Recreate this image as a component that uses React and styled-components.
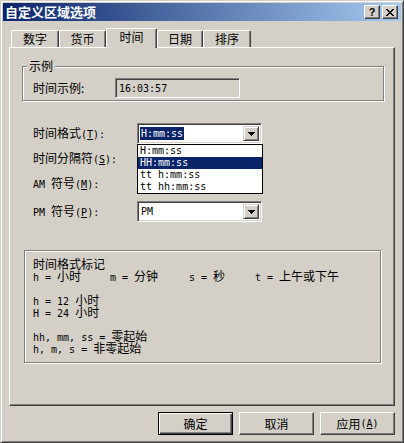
import React from 'react';
import styled, { createGlobalStyle, css } from 'styled-components';

const CJK = `"Noto Sans CJK SC", "Noto Sans", sans-serif`;
const MONO = `"DejaVu Sans Mono", "Liberation Mono", monospace`;

const GlobalStyle = createGlobalStyle`
  html, body { margin: 0; padding: 0; background: #d4d0c8; }
  body {
    width: 404px; height: 443px; overflow: hidden;
    font-family: ${CJK}; font-size: 12px; color: #000;
    -webkit-font-smoothing: antialiased;
  }
  * { box-sizing: border-box; }
`;

const Window = styled.div`
  width: 404px;
  height: 443px;
  background: #d4d0c8;
  border: 1px solid;
  border-color: #d4d0c8 #404040 #404040 #d4d0c8;
  box-shadow: inset 1px 1px #fff, inset -1px -1px #808080;
  padding: 2px;
  display: flex;
  flex-direction: column;
`;

const TitleBar = styled.div`
  flex: none;
  height: 18px;
  background: linear-gradient(to right, #0a246a, #a6caf0);
  display: flex;
  align-items: center;
  padding: 0 3px 0 2px;
  gap: 2px;
`;

const Title = styled.div`
  flex: 1;
  color: #fff;
  font: bold 13px/18px ${CJK};
  white-space: nowrap;
`;

const CapButton = styled.div`
  width: 16px;
  height: 14px;
  background: #d4d0c8;
  border: 1px solid;
  border-color: #fff #404040 #404040 #fff;
  box-shadow: inset -1px -1px #808080;
  display: flex;
  align-items: center;
  justify-content: center;
`;

const HelpGlyph = styled.span`
  font: bold 11px/11px "Liberation Sans", "DejaVu Sans", sans-serif;
  color: #000;
  margin-top: 1px;
`;

const Body = styled.div`
  flex: 1;
  display: flex;
  flex-direction: column;
  padding: 0 6px;
`;

const TabStrip = styled.div`
  margin-top: 7px;
  height: 19px;
  display: flex;
  align-items: flex-end;
  padding-left: 2px;
  position: relative;
  z-index: 2;
`;

const Tab = styled.div`
  width: ${p => p.$w}px;
  height: 17px;
  background: #d4d0c8;
  border-top: 1px solid #fff;
  border-left: 1px solid #fff;
  border-right: 1px solid #404040;
  border-radius: 2px 2px 0 0;
  box-shadow: inset -1px 0 #808080;
  display: flex;
  align-items: center;
  justify-content: center;
  font: 12px/12px ${CJK};
  ${p => p.$active && css`
    height: 20px;
    margin-bottom: -1px;
    padding-bottom: 3px;
  `}
`;

const Panel = styled.div`
  height: 359px;
  border: 1px solid;
  border-color: #fff #404040 #404040 #fff;
  box-shadow: inset -1px -1px #808080;
  padding: 0 10px 0 12px;
  display: flex;
  flex-direction: column;
`;

const etched = css`
  border: 1px solid #808080;
  box-shadow: inset 1px 1px #fff, 1px 1px #fff;
`;

const GroupBox = styled.div`
  position: relative;
  margin-top: 18px;
  height: 35px;
  ${etched}
  padding: 11px 0 0 10px;
`;

const GroupLegend = styled.span`
  position: absolute;
  top: -7px;
  left: 4px;
  padding: 0 2px;
  background: #d4d0c8;
  font: 12px/12px ${CJK};
`;

const SampleRow = styled.div`
  display: flex;
  align-items: center;
`;

const SampleLabel = styled.span`
  width: 82px;
  font: 12px/12px ${CJK};
`;

const sunken = css`
  border: 1px solid;
  border-color: #808080 #fff #fff #808080;
  box-shadow: inset 1px 1px #404040, inset -1px -1px #d4d0c8;
`;

const ReadField = styled.div`
  width: 125px;
  height: 20px;
  ${sunken}
  background: #d4d0c8;
  padding: 0 0 0 3px;
  display: flex;
  align-items: center;
`;

const Mono = styled.span`
  font-family: ${MONO};
  font-size: 10px;
`;

const Form = styled.div`
  margin: 22px 0 0 11px;
  display: grid;
  grid-template-columns: 104px 125px;
  grid-auto-rows: 21px;
  row-gap: 4px;
  align-items: center;
`;

const FieldLabel = styled.label`
  font: 12px/12px ${CJK};
  white-space: pre;
  ${p => p.$late && css`margin-top: 6px;`}
`;

const Combo = styled.div`
  position: relative;
  width: 125px;
  height: 21px;
  background: #fff;
  ${sunken}
  padding: 2px;
  display: flex;
  ${p => p.$open && css`z-index: 3;`}
  ${p => p.$late && css`margin-top: 6px;`}
`;

const ComboValue = styled.div`
  flex: 1;
  display: flex;
  align-items: center;
  padding-left: 1px;
  font: 10px/13px ${MONO};
  white-space: pre;
`;

const Selected = styled.span`
  background: #0a246a;
  color: #fff;
  padding: 0 1px;
  margin-left: -1px;
  line-height: 13px;
`;

const DropButton = styled.div`
  width: 16px;
  background: #d4d0c8;
  border: 1px solid;
  border-color: #d4d0c8 #404040 #404040 #d4d0c8;
  box-shadow: inset 1px 1px #fff, inset -1px -1px #808080;
  display: flex;
  align-items: center;
  justify-content: center;
`;

const DropList = styled.ul`
  position: absolute;
  top: calc(100% + 1px);
  left: -1px;
  width: 126px;
  margin: 0;
  padding: 0;
  list-style: none;
  background: #fff;
  border: 1px solid #000;
`;

const DropItem = styled.li`
  height: 12px;
  line-height: 12px;
  padding-left: 2px;
  font: 10px/12px ${MONO};
  white-space: pre;
  ${p => p.$hot && css`
    background: #0a246a;
    color: #fff;
  `}
`;

const NotesBox = styled.div`
  margin: 31px 3px 0 2px;
  height: 113px;
  ${etched}
  padding: 7px 0 0 8px;
  font: 12px/12px ${CJK};
`;

const NoteLine = styled.div`
  height: 12px;
  line-height: 12px;
  white-space: pre;
  ${p => p.$gap && css`margin-top: 12px;`}
`;

const KeyRow = styled.div`
  display: grid;
  grid-template-columns: 77px 79px 66px auto;
  height: 12px;
  line-height: 12px;
  white-space: pre;
`;

const ButtonRow = styled.div`
  margin-top: 6px;
  display: flex;
  justify-content: flex-end;
  gap: 6px;
`;

const Btn = styled.div`
  width: 75px;
  height: 23px;
  background: #d4d0c8;
  font: 12px/12px ${CJK};
  color: #000;
  border: 1px solid;
  border-color: #fff #404040 #404040 #fff;
  box-shadow: inset -1px -1px #808080;
  display: flex;
  align-items: center;
  justify-content: center;
  white-space: pre;
  ${p => p.$default && css`
    border: 1px solid #000;
    box-shadow: inset 1px 1px #fff, inset -1px -1px #404040, inset -2px -2px #808080;
  `}
`;

const CloseIcon = () => (
  <svg width="8" height="7" viewBox="0 0 8 7" shapeRendering="crispEdges">
    <path
      fill="#000"
      d="M0 0h2v1h-2zM6 0h2v1h-2zM1 1h2v1h-2zM5 1h2v1h-2zM2 2h4v1h-4zM3 3h2v1h-2zM2 4h4v1h-4zM1 5h2v1h-2zM5 5h2v1h-2zM0 6h2v1h-2zM6 6h2v1h-2z"
    />
  </svg>
);

const Arrow = () => (
  <svg width="7" height="4" viewBox="0 0 7 4" shapeRendering="crispEdges">
    <path fill="#000" d="M0 0h7v1h-7zM1 1h5v1h-5zM2 2h3v1h-3zM3 3h1v1h-1z" />
  </svg>
);

const tabs = [
  { label: '数字', w: 48 },
  { label: '货币', w: 47 },
  { label: '时间', w: 51, active: true },
  { label: '日期', w: 46 },
  { label: '排序', w: 48 },
];

const formats = ['H:mm:ss', 'HH:mm:ss', 'tt h:mm:ss', 'tt hh:mm:ss'];

export default function App() {
  return (
    <>
      <GlobalStyle />
      <Window>
        <TitleBar>
          <Title>自定义区域选项</Title>
          <CapButton><HelpGlyph>?</HelpGlyph></CapButton>
          <CapButton><CloseIcon /></CapButton>
        </TitleBar>
        <Body>
          <TabStrip>
            {tabs.map(t => (
              <Tab key={t.label} $w={t.w} $active={t.active}>{t.label}</Tab>
            ))}
          </TabStrip>
          <Panel>
            <GroupBox>
              <GroupLegend>示例</GroupLegend>
              <SampleRow>
                <SampleLabel>时间示例:</SampleLabel>
                <ReadField><Mono>16:03:57</Mono></ReadField>
              </SampleRow>
            </GroupBox>
            <Form>
              <FieldLabel>时间格式<Mono>(<u>T</u>):</Mono></FieldLabel>
              <Combo $open>
                <ComboValue><Selected>H:mm:ss</Selected></ComboValue>
                <DropButton><Arrow /></DropButton>
                <DropList>
                  {formats.map((f, i) => (
                    <DropItem key={f} $hot={i === 1}>{f}</DropItem>
                  ))}
                </DropList>
              </Combo>
              <FieldLabel>时间分隔符<Mono>(<u>S</u>):</Mono></FieldLabel>
              <Combo>
                <ComboValue />
                <DropButton><Arrow /></DropButton>
              </Combo>
              <FieldLabel><Mono>AM </Mono>符号<Mono>(<u>M</u>):</Mono></FieldLabel>
              <Combo>
                <ComboValue />
                <DropButton><Arrow /></DropButton>
              </Combo>
              <FieldLabel $late><Mono>PM </Mono>符号<Mono>(<u>P</u>):</Mono></FieldLabel>
              <Combo $late>
                <ComboValue>PM</ComboValue>
                <DropButton><Arrow /></DropButton>
              </Combo>
            </Form>
            <NotesBox>
              <NoteLine>时间格式标记</NoteLine>
              <KeyRow>
                <span><Mono>h = </Mono>小时</span>
                <span><Mono>m = </Mono>分钟</span>
                <span><Mono>s = </Mono>秒</span>
                <span><Mono>t = </Mono>上午或下午</span>
              </KeyRow>
              <NoteLine $gap><Mono>h = 12 </Mono>小时</NoteLine>
              <NoteLine><Mono>H = 24 </Mono>小时</NoteLine>
              <NoteLine $gap><Mono>hh, mm, ss = </Mono>零起始</NoteLine>
              <NoteLine><Mono>h, m, s = </Mono>非零起始</NoteLine>
            </NotesBox>
          </Panel>
          <ButtonRow>
            <Btn $default>确定</Btn>
            <Btn>取消</Btn>
            <Btn>应用<Mono>(<u>A</u>)</Mono></Btn>
          </ButtonRow>
        </Body>
      </Window>
    </>
  );
}
